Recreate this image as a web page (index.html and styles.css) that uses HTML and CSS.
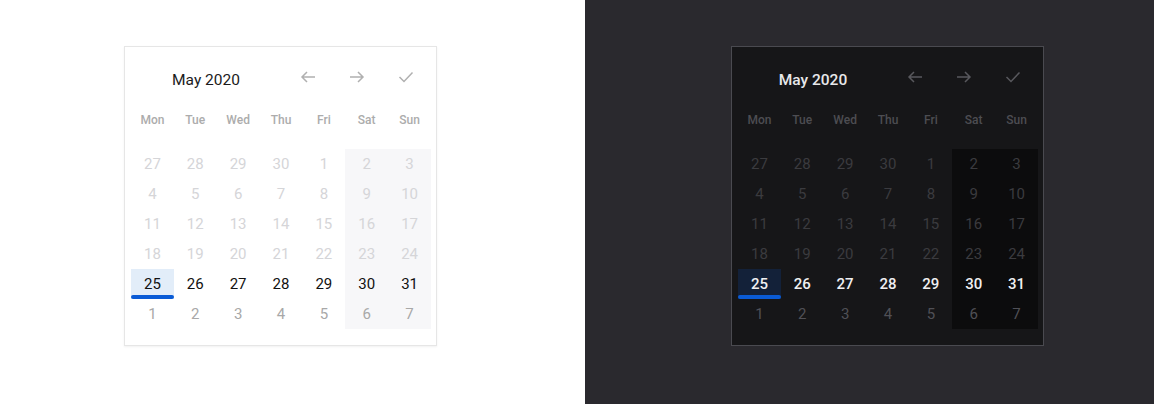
FILE: index.html
```html
<!DOCTYPE html>
<html>
<head>
<meta charset="utf-8">
<link rel="stylesheet" href="styles.css">
</head>
<body>
<div class="page">
  <section class="panel panel-light">
    <div class="cal">
      <div class="cal-head">
        <div class="cal-title">May 2020</div>
        <button class="cal-btn"><svg width="16" height="12" viewBox="0 0 16 12"><path d="M15 6H2M7 1L2 6l5 5" fill="none" stroke="currentColor" stroke-width="1.5"/></svg></button>
        <button class="cal-btn"><svg width="16" height="12" viewBox="0 0 16 12"><path d="M1 6h13M9 1l5 5-5 5" fill="none" stroke="currentColor" stroke-width="1.5"/></svg></button>
        <button class="cal-btn"><svg width="16" height="12" viewBox="0 0 16 12"><path d="M1.5 6l4.5 4.5L14.5 1.5" fill="none" stroke="currentColor" stroke-width="1.5"/></svg></button>
      </div>
      <div class="cal-week">
        <span>Mon</span><span>Tue</span><span>Wed</span><span>Thu</span><span>Fri</span><span>Sat</span><span>Sun</span>
      </div>
      <div class="cal-grid">
        <span class="d off">27</span><span class="d off">28</span><span class="d off">29</span><span class="d off">30</span><span class="d off">1</span><span class="d off we">2</span><span class="d off we">3</span>
        <span class="d off">4</span><span class="d off">5</span><span class="d off">6</span><span class="d off">7</span><span class="d off">8</span><span class="d off we">9</span><span class="d off we">10</span>
        <span class="d off">11</span><span class="d off">12</span><span class="d off">13</span><span class="d off">14</span><span class="d off">15</span><span class="d off we">16</span><span class="d off we">17</span>
        <span class="d off">18</span><span class="d off">19</span><span class="d off">20</span><span class="d off">21</span><span class="d off">22</span><span class="d off we">23</span><span class="d off we">24</span>
        <span class="d cur sel">25</span><span class="d cur">26</span><span class="d cur">27</span><span class="d cur">28</span><span class="d cur">29</span><span class="d cur we">30</span><span class="d cur we">31</span>
        <span class="d nxt">1</span><span class="d nxt">2</span><span class="d nxt">3</span><span class="d nxt">4</span><span class="d nxt">5</span><span class="d nxt we">6</span><span class="d nxt we">7</span>
      </div>
    </div>
  </section>
  <section class="panel panel-dark">
    <div class="cal">
      <div class="cal-head">
        <div class="cal-title">May 2020</div>
        <button class="cal-btn"><svg width="16" height="12" viewBox="0 0 16 12"><path d="M15 6H2M7 1L2 6l5 5" fill="none" stroke="currentColor" stroke-width="1.5"/></svg></button>
        <button class="cal-btn"><svg width="16" height="12" viewBox="0 0 16 12"><path d="M1 6h13M9 1l5 5-5 5" fill="none" stroke="currentColor" stroke-width="1.5"/></svg></button>
        <button class="cal-btn"><svg width="16" height="12" viewBox="0 0 16 12"><path d="M1.5 6l4.5 4.5L14.5 1.5" fill="none" stroke="currentColor" stroke-width="1.5"/></svg></button>
      </div>
      <div class="cal-week">
        <span>Mon</span><span>Tue</span><span>Wed</span><span>Thu</span><span>Fri</span><span>Sat</span><span>Sun</span>
      </div>
      <div class="cal-grid">
        <span class="d off">27</span><span class="d off">28</span><span class="d off">29</span><span class="d off">30</span><span class="d off">1</span><span class="d off we">2</span><span class="d off we">3</span>
        <span class="d off">4</span><span class="d off">5</span><span class="d off">6</span><span class="d off">7</span><span class="d off">8</span><span class="d off we">9</span><span class="d off we">10</span>
        <span class="d off">11</span><span class="d off">12</span><span class="d off">13</span><span class="d off">14</span><span class="d off">15</span><span class="d off we">16</span><span class="d off we">17</span>
        <span class="d off">18</span><span class="d off">19</span><span class="d off">20</span><span class="d off">21</span><span class="d off">22</span><span class="d off we">23</span><span class="d off we">24</span>
        <span class="d cur sel">25</span><span class="d cur">26</span><span class="d cur">27</span><span class="d cur">28</span><span class="d cur">29</span><span class="d cur we">30</span><span class="d cur we">31</span>
        <span class="d nxt">1</span><span class="d nxt">2</span><span class="d nxt">3</span><span class="d nxt">4</span><span class="d nxt">5</span><span class="d nxt we">6</span><span class="d nxt we">7</span>
      </div>
    </div>
  </section>
</div>
</body>
</html>
```
FILE: styles.css
```css
* { box-sizing: border-box; }
html, body { margin: 0; padding: 0; }
body { font-family: Roboto, "Liberation Sans", sans-serif; }
.page { display: flex; width: 1154px; height: 404px; }
.panel { height: 404px; padding-top: 46px; }
.panel-light { width: 585px; background: #ffffff; padding-left: 124px; }
.panel-dark { width: 569px; background: #2a292e; padding-left: 146px; }

.cal {
  width: 313px;
  height: 300px;
  border: 1px solid #e6e6e6;
  padding: 0 5px 0 6px;
}
.panel-light .cal { background: #fff; box-shadow: 0 1px 2px rgba(0,0,0,0.06); }
.panel-dark .cal { background: #161618; border-color: #4a4a50; }

.cal-head { display: flex; height: 64px; align-items: center; }
.cal-title { width: 152px; text-align: center; font-size: 15.5px; padding-top: 1px; padding-right: 2px; }
.cal-btn {
  width: 49px; height: 30px; padding: 0; border: 0; background: none;
  display: flex; align-items: center; justify-content: center; margin-top: -4px;
}
.cal-btn svg { display: block; }

.cal-week { display: grid; grid-template-columns: repeat(7, 1fr); height: 18px; align-items: center; margin-bottom: 20px; }
.cal-week span { text-align: center; font-size: 12px; font-weight: 500; }

.cal-grid { display: grid; grid-template-columns: repeat(7, 1fr); grid-auto-rows: 30px; }
.d { display: flex; align-items: center; justify-content: center; font-size: 15px; position: relative; }
.sel::after {
  content: ""; position: absolute; left: 0; right: 0; bottom: 0; height: 4px; border-radius: 2px;
  background: #0a5bd6;
}

/* light */
.panel-light .cal-title { color: #1b1b1b; }
.panel-light .cal-btn { color: #b0b0b0; }
.panel-light .cal-week span { color: #acacac; }
.panel-light .we { background: #f7f7f9; }
.panel-light .off { color: #d5d5d8; }
.panel-light .cur { color: #111; }
.panel-light .nxt { color: #a8a8a8; }
.panel-light .sel { background: #e2edf9; }

/* dark */
.panel-dark .cal-title { color: #e8e8ea; font-weight: 500; }
.panel-dark .cal-btn { color: #58585d; }
.panel-dark .cal-week span { color: #4d4d52; }
.panel-dark .we { background: #0c0c0d; }
.panel-dark .off { color: #3b3b3f; }
.panel-dark .cur { color: #f0f0f2; font-weight: 500; }
.panel-dark .nxt { color: #505056; }
.panel-dark .sel { background: #132139; }
```
